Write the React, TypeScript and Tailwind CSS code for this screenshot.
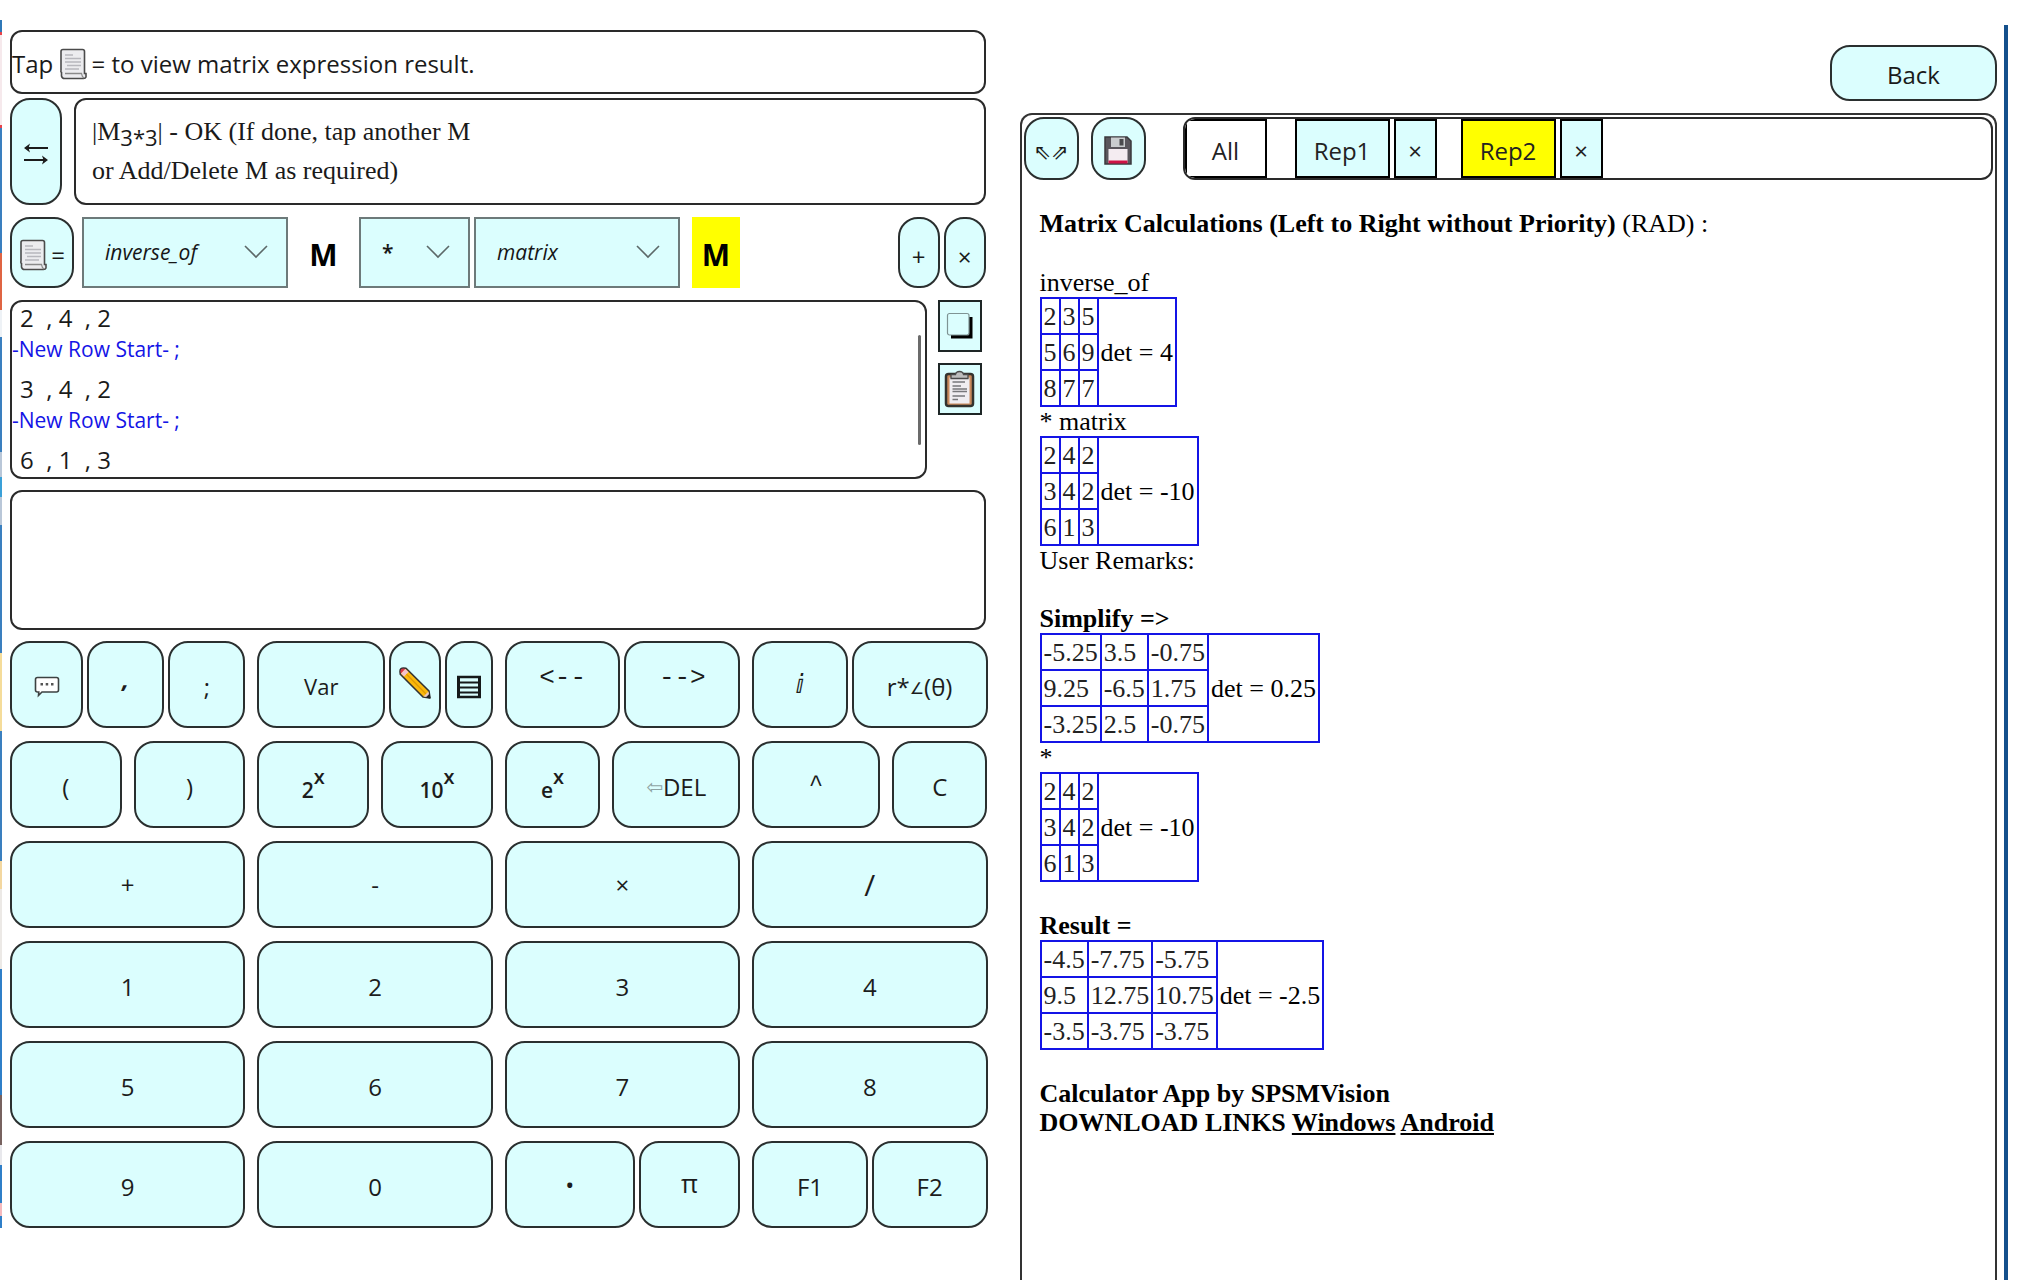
import type { ReactNode } from "react";

const keyBase =
  "flex items-center justify-center border-2 border-[#2a2f2f] bg-[#dbfefe] text-[#1c1c1c] h-[87px] rounded-[20px] min-w-0 pt-1";

function Key({
  label,
  children,
  className = "",
  size = "text-2xl",
}: {
  label?: string;
  children: ReactNode;
  className?: string;
  size?: string;
}) {
  return (
    <button type="button" aria-label={label} className={`${keyBase} ${size} ${className}`}>
      {children}
    </button>
  );
}

function PowerKey({ base }: { base: string }) {
  return (
    <Key size="text-[21px]" className="font-semibold">
      <span className="pt-2">{base}</span>
      <span className="pb-5 text-xl">x</span>
    </Key>
  );
}

function ScrollIcon() {
  return (
    <svg width="28" height="32" viewBox="0 0 28 32" className="shrink-0" aria-hidden="true">
      <path
        d="M2 3.500Q2 1.500 4 1.500H23.500Q25.500 1.500 25.500 3.500V25.500H27V29Q26.500 30.500 24.500 30.500H5.500Q3 30.500 2.500 28V24.500Q1.500 24 2 22Z"
        fill="#ececef"
        stroke="#4b4b4b"
        strokeWidth="1.600"
      />
      <path d="M6 25.500H22.500Q23 29 25 30" fill="none" stroke="#8a8a8a" strokeWidth="1.300" />
      <path d="M6 7H14M6 10.500H22M6 14H22M8 17.500H22M6 21H20" stroke="#b7b7bd" strokeWidth="1.400" />
    </svg>
  );
}

function SwapIcon() {
  return (
    <svg width="26" height="24" viewBox="0 0 26 24" aria-hidden="true">
      <path d="M4 6H25M1 18H22" stroke="#1c1c1c" strokeWidth="2" />
      <path d="M1 6L7 1.500L5.500 6L7 10.500ZM25 18L19 13.500L20.500 18L19 22.500Z" fill="#1c1c1c" />
    </svg>
  );
}

function CopyIcon() {
  return (
    <svg width="28" height="28" viewBox="0 0 28 28" aria-hidden="true">
      <path d="M5 5H26.500V26.500H5Z" fill="#000" />
      <rect x="1.500" y="1.500" width="21.500" height="21.500" rx="2" fill="#dbfefe" stroke="#7f9494" strokeWidth="1.200" />
    </svg>
  );
}

function ClipboardIcon() {
  return (
    <svg width="32" height="38" viewBox="0 0 32 38" className="shrink-0" aria-hidden="true">
      <rect x="2" y="4" width="27" height="32" rx="2.500" fill="#c98a5c" stroke="#33332f" strokeWidth="2.500" />
      <rect x="5.500" y="7.500" width="20" height="26" fill="#efedf1" />
      <path d="M7 4.500H11.500Q12 1.500 15.500 1.500T19.500 4.500H24V8.500H7Z" fill="#bdbdbd" stroke="#4a4a4a" strokeWidth="1.300" />
      <path d="M8.500 12H21M8.500 16H17M8.500 19H23M8.500 21.500H23M8.500 26H21M8.500 29.500H14" stroke="#77777b" strokeWidth="1.600" />
    </svg>
  );
}

function ChatIcon() {
  return (
    <svg width="26" height="22" viewBox="0 0 26 22" aria-hidden="true">
      <path
        d="M3.500 1.500H22.500Q24.500 1.500 24.500 3.500V14Q24.500 16 22.500 16H8L4.500 19.500L4.800 16H3.500Q1.500 16 1.500 14V3.500Q1.500 1.500 3.500 1.500Z"
        fill="#fff"
        stroke="#3c4242"
        strokeWidth="1.600"
      />
      <path d="M6.500 7H9V9.500H6.500ZM11.700 7H14.200V9.500H11.700ZM17 7H19.500V9.500H17Z" fill="#555" />
    </svg>
  );
}

function PencilIcon() {
  return (
    <svg width="34" height="34" viewBox="0 0 34 34" className="mb-2 shrink-0" aria-hidden="true">
      <path d="M2 5.500Q2 2 5.500 2L8 2.300L31 25L32 32L25 31L2.300 8.300Z" fill="#fbb80d" stroke="#333" strokeWidth="1.600" strokeLinejoin="round" />
      <path d="M2.500 5.500Q2.500 2.500 5.500 2.500L7.300 3L3 7.500Z" fill="#d8334a" />
      <path d="M7.300 3L10.500 6L6 10.500L3 7.500Z" fill="#f3c3cc" />
      <path d="M8.500 8.300L28 28" stroke="#e09a00" strokeWidth="1.300" />
      <path d="M30.500 25.500L31.500 31.500L25.500 30.500Z" fill="#e9c9c3" />
      <path d="M31.200 28.500L32 32L28.500 31.300Z" fill="#222" stroke="#222" />
    </svg>
  );
}

function ListIcon() {
  return (
    <svg width="26" height="24" viewBox="0 0 26 24" fill="none" stroke="#16191a" aria-hidden="true">
      <path d="M2.500 1V23M23.500 1V23" strokeWidth="3" />
      <path d="M1 2H25M1 22H25" strokeWidth="2.400" />
      <path d="M3 7.500H23M3 12.500H23M3 17.500H23" strokeWidth="2.200" />
    </svg>
  );
}

function FloppyIcon() {
  return (
    <svg width="28" height="29" viewBox="0 0 28 29" aria-hidden="true">
      <path d="M1 1H23L27 5V28H1Z" fill="#59565c" stroke="#3b393d" strokeWidth="1.500" />
      <rect x="7" y="1.500" width="14" height="9.500" fill="#c9ccce" />
      <rect x="15.500" y="3" width="4" height="6.500" fill="#4a4a4d" />
      <rect x="4.500" y="13" width="19" height="14" fill="#f4ecf1" />
      <rect x="4.500" y="24.500" width="19" height="3" fill="#cf1245" />
    </svg>
  );
}

function Picker({
  label,
  value,
  className,
  text = "italic",
}: {
  label: string;
  value: string;
  className: string;
  text?: string;
}) {
  return (
    <div className={`relative ${className}`}>
      <select
        aria-label={label}
        defaultValue={value}
        className={`h-full w-full appearance-none rounded-none border-2 border-[#6d7a7a] bg-[#dbfefe] pl-[21px] text-[21px] text-[#161616] ${text}`}
      >
        <option>{value}</option>
      </select>
      <svg
        width="24"
        height="14"
        viewBox="0 0 24 14"
        fill="none"
        stroke="#5c6868"
        strokeWidth="1.600"
        className="pointer-events-none absolute right-5 top-7"
        aria-hidden="true"
      >
        <path d="M1 1L12 12L23 1" />
      </svg>
    </div>
  );
}

function Matrix({ rows, det }: { rows: string[][]; det: string }) {
  return (
    <table className="border-collapse border-2 border-[#1414e6]">
      <tbody>
        {rows.map((row, i) => (
          <tr key={i} className="h-9">
            {row.map((cell, j) => (
              <td key={j} className="border-2 border-[#1414e6] px-0.5 text-[#222]">
                {cell}
              </td>
            ))}
            {i === 0 && (
              <td rowSpan={3} className="border-2 border-[#1414e6] px-0.5">
                det = {det}
              </td>
            )}
          </tr>
        ))}
      </tbody>
    </table>
  );
}

const right = [
  ["2", "4", "2"],
  ["3", "4", "2"],
  ["6", "1", "3"],
];

const edge: [string, number][] = [
  ["bg-[#2f78b8]", 12],
  ["bg-[#e8434a]", 3],
  ["bg-[#f6e9ec]", 90],
  ["bg-[#e8434a]", 3],
  ["bg-[#3a7fbf]", 125],
  ["bg-[#df6443]", 57],
  ["bg-[#eef2f6]", 27],
  ["bg-[#3a7fbf]", 115],
  ["bg-[#b9c7d8]", 25],
  ["bg-[#3aa0d8]", 20],
  ["bg-[#b9c7d8]", 28],
  ["bg-[#3a7fbf]", 128],
  ["bg-[#f5dc9a]", 78],
  ["bg-[#3a7fbf]", 130],
  ["bg-[#f3d7a0]", 28],
  ["bg-[#ece9e6]", 80],
  ["bg-[#2f7fc8]", 126],
  ["bg-[#77625f]", 50],
  ["bg-[#e8e8ec]", 20],
  ["bg-[#2f7fc8]", 38],
  ["bg-[#f5b9bd]", 13],
  ["bg-[#2f7fc8]", 12],
];

const sans = "font-['Open_Sans','Noto_Sans',sans-serif]";
const serif = "font-['Liberation_Serif',serif]";
const panel = "border-2 border-[#2a2a2a] rounded-[12px]";
const tab = "flex shrink-0 items-center justify-center border-2 border-black pt-1 text-2xl text-[#222]";

export default function App() {
  return (
    <div className={`flex min-h-screen bg-white text-[#1a1a1a] ${sans}`}>
      <div className="flex w-0.5 flex-col pt-5" aria-hidden="true">
        {edge.map(([color, h], i) => (
          <div key={i} className={color} style={{ height: h }} />
        ))}
      </div>

      <main className="flex min-w-0 flex-1 flex-col pb-8 pl-2 pt-[30px]">
        <div className="flex flex-col pr-0.5">
          <div className={`${panel} flex h-16 items-center whitespace-pre pt-1 text-2xl`}>
            Tap <ScrollIcon />
            <span className="pl-1">= to view matrix expression result.</span>
          </div>

          <div className="mt-1 flex h-[107px] gap-3">
            <button type="button" aria-label="Swap" className="flex w-[52px] items-center justify-center rounded-[20px] border-2 border-[#2a2f2f] bg-[#dbfefe] pt-1">
              <SwapIcon />
            </button>
            <div className={`${panel} ${serif} flex-1 px-4 pt-3 text-[26px] leading-[39px]`}>
              <p>
                |M<sub className={`text-[22px] leading-none ${sans}`}>3*3</sub>| - OK (If done, tap another M
              </p>
              <p>or Add/Delete M as required)</p>
            </div>
          </div>

          <div className="mt-3 flex h-[71px] items-stretch">
            <button type="button" aria-label="Show result" className="flex w-16 items-center justify-center gap-1 rounded-[20px] border-2 border-[#2a2f2f] bg-[#dbfefe] pt-1 text-2xl">
              <ScrollIcon />=
            </button>
            <Picker label="First operation" value="inverse_of" className="ml-2 w-[206px]" />
            <button type="button" className="w-[71px] pt-1 text-[30px] font-bold text-black">M</button>
            <Picker label="Operator" value="*" className="w-[111px]" text="font-semibold" />
            <Picker label="Second operation" value="matrix" className="ml-1 w-[206px]" />
            <button type="button" className="ml-3 w-12 bg-[#ffff00] pt-1 text-[30px] font-bold text-black">M</button>
            <div className="ml-auto flex gap-1">
              <button type="button" aria-label="Add matrix" className="w-[42px] rounded-[20px] border-2 border-[#2a2f2f] bg-[#dbfefe] pt-2 text-2xl">+</button>
              <button type="button" aria-label="Delete matrix" className="w-[42px] rounded-[20px] border-2 border-[#2a2f2f] bg-[#dbfefe] pt-2 text-2xl">×</button>
            </div>
          </div>

          <div className="mt-3 flex gap-[11px]">
            <div className={`${panel} relative h-[179px] flex-1 overflow-hidden pt-px text-2xl leading-[30px]`}>
              <p className="whitespace-pre pl-2">2  , 4  , 2</p>
              <p className="mb-2 text-[21px] leading-[33px] text-[#1414e6]">-New Row Start- ;</p>
              <p className="whitespace-pre pl-2">3  , 4  , 2</p>
              <p className="mb-2 text-[21px] leading-[33px] text-[#1414e6]">-New Row Start- ;</p>
              <p className="whitespace-pre pl-2">6  , 1  , 3</p>
              <div className="absolute right-1 top-[33px] h-[110px] w-[3px] rounded-full bg-[#6b6b6b]" />
            </div>
            <div className="mr-1 flex w-11 flex-col gap-[11px]">
              <button type="button" aria-label="Copy" className="flex h-[52px] items-center justify-center border-2 border-[#1e2626] bg-[#dbfefe]">
                <CopyIcon />
              </button>
              <button type="button" aria-label="Paste" className="flex h-[52px] items-center justify-center border-2 border-[#1e2626] bg-[#dbfefe]">
                <ClipboardIcon />
              </button>
            </div>
          </div>

          <div className={`${panel} mt-[11px] h-[140px]`} />
        </div>

        <div className="mt-[11px] grid grid-cols-4 gap-x-3 gap-y-[13px]">
          <div className="grid grid-cols-[73fr_77fr_77fr] gap-1">
            <Key label="Comment"><ChatIcon /></Key>
            <Key className="pb-4 font-bold italic">,</Key>
            <Key>;</Key>
          </div>
          <div className="grid grid-cols-[127fr_52fr_47fr] gap-1">
            <Key size="text-[22px]">Var</Key>
            <Key label="Edit"><PencilIcon /></Key>
            <Key label="List"><ListIcon /></Key>
          </div>
          <div className="grid grid-cols-2 gap-1">
            <Key size="text-[26px]" className="pb-4 font-['Liberation_Mono',monospace]">&lt;--</Key>
            <Key size="text-[26px]" className="pb-4 font-['Liberation_Mono',monospace]">--&gt;</Key>
          </div>
          <div className="grid grid-cols-[95fr_135fr] gap-1">
            <Key size="text-[26px]" className="pb-1 font-['DejaVu_Sans',sans-serif]">ⅈ</Key>
            <Key>r*<span className="pt-1 font-['DejaVu_Sans',sans-serif] text-base">∠</span>(θ)</Key>
          </div>

          <div className="grid grid-cols-2 gap-3">
            <Key>(</Key>
            <Key>)</Key>
          </div>
          <div className="grid grid-cols-2 gap-3">
            <PowerKey base="2" />
            <PowerKey base="10" />
          </div>
          <div className="grid grid-cols-[95fr_127fr] gap-3">
            <PowerKey base="e" />
            <Key><span className="font-['DejaVu_Sans',sans-serif] text-xl text-[#8ea3a3]">⇦</span>DEL</Key>
          </div>
          <div className="grid grid-cols-[127fr_95fr] gap-3">
            <Key className="pb-1 font-['Liberation_Mono',monospace]">^</Key>
            <Key>C</Key>
          </div>

          {["+", "-", "×"].map((k) => (
            <Key key={k} className="pb-1">{k}</Key>
          ))}
          <Key size="text-[30px]" className="pb-1">/</Key>
          {["1", "2", "3", "4", "5", "6", "7", "8", "9", "0"].map((k) => (
            <Key key={k}>{k}</Key>
          ))}
          <div className="grid grid-cols-[128fr_100fr] gap-1">
            <Key className="pb-1">•</Key>
            <Key size="text-[26px]" className="pb-1.5">π</Key>
          </div>
          <div className="grid grid-cols-2 gap-1">
            <Key>F1</Key>
            <Key>F2</Key>
          </div>
        </div>
      </main>

      <aside className="ml-8 flex min-w-0 flex-1 flex-col pt-[45px]">
        <button type="button" className="h-14 w-[167px] self-end rounded-[20px] border-2 border-[#2a2f2f] bg-[#dbfefe] pt-1 text-2xl">
          Back
        </button>
        <section className="mt-3 flex flex-1 flex-col rounded-t-[12px] border-2 border-b-0 border-[#333] px-0.5 pt-0.5">
          <div className="flex h-[63px]">
            <button type="button" aria-label="Expand" className="flex w-[55px] items-center justify-center rounded-[20px] border-2 border-[#2a2f2f] bg-[#dbfefe] pt-2 font-['DejaVu_Sans',sans-serif] text-[21px]">
              ⇖⇗
            </button>
            <button type="button" aria-label="Save" className="ml-3 flex w-[55px] items-center justify-center rounded-[20px] border-2 border-[#2a2f2f] bg-[#dbfefe] pt-1">
              <FloppyIcon />
            </button>
            <div className={`${panel} ml-[37px] flex flex-1 items-stretch overflow-hidden`}>
              <button type="button" className={`${tab} w-[82px] bg-white`}>All</button>
              <button type="button" className={`${tab} ml-7 w-[95px] bg-[#dbfefe]`}>Rep1</button>
              <button type="button" aria-label="Close Rep1" className={`${tab} ml-1 w-[43px] bg-[#dbfefe]`}>×</button>
              <button type="button" className={`${tab} ml-6 w-[95px] bg-[#ffff00]`}>Rep2</button>
              <button type="button" aria-label="Close Rep2" className={`${tab} ml-1 w-[43px] bg-[#dbfefe]`}>×</button>
            </div>
          </div>

          <div className={`${serif} px-4 pt-[29px] text-[26px] leading-[29px] text-black`}>
            <p>
              <strong>Matrix Calculations (Left to Right without Priority)</strong> (RAD) :
            </p>
            <p className="mt-[30px]">inverse_of</p>
            <Matrix rows={[["2", "3", "5"], ["5", "6", "9"], ["8", "7", "7"]]} det="4" />
            <p>* matrix</p>
            <Matrix rows={right} det="-10" />
            <p>User Remarks:</p>
            <p className="mt-[29px] font-bold">Simplify =&gt;</p>
            <Matrix rows={[["-5.25", "3.5", "-0.75"], ["9.25", "-6.5", "1.75"], ["-3.25", "2.5", "-0.75"]]} det="0.25" />
            <p>*</p>
            <Matrix rows={right} det="-10" />
            <p className="mt-[29px] font-bold">Result =</p>
            <Matrix rows={[["-4.5", "-7.75", "-5.75"], ["9.5", "12.75", "10.75"], ["-3.5", "-3.75", "-3.75"]]} det="-2.5" />
            <p className="mt-[29px] font-bold">Calculator App by SPSMVision</p>
            <p className="font-bold">
              DOWNLOAD LINKS <a href="#windows" className="underline">Windows</a> <a href="#android" className="underline">Android</a>
            </p>
          </div>
        </section>
      </aside>

      <div className="ml-[7px] mr-3.5 mt-[25px] w-1 bg-[#14508c]" />
    </div>
  );
}
